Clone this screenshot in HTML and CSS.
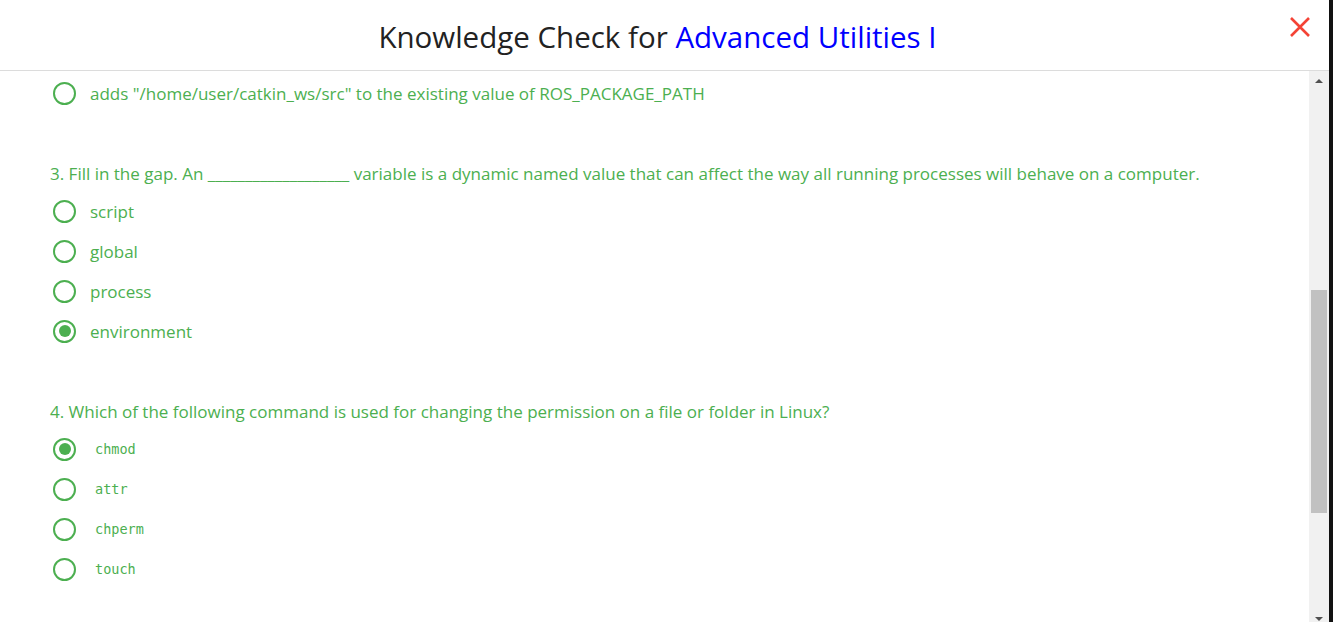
FILE: index.html
```html
<!DOCTYPE html>
<html>
<head>
<meta charset="utf-8">
<link rel="stylesheet" href="styles.css">
</head>
<body>
<div class="modal">
  <header class="modal-header">
    <h1 class="title">Knowledge Check for <span class="course">Advanced Utilities I</span></h1>
    <button class="close" aria-label="Close">
      <svg width="22" height="22" viewBox="0 0 22 22"><path d="M2 2 L20 20 M20 2 L2 20" stroke="#f44336" stroke-width="2.6" stroke-linecap="butt" fill="none"/></svg>
    </button>
  </header>
  <div class="modal-body">
    <div class="content">
      <div class="options first">
        <label class="option"><span class="radio"></span><span class="label">adds "/home/user/catkin_ws/src" to the existing value of ROS_PACKAGE_PATH</span></label>
      </div>

      <div class="question">
        <p class="q-text">3. Fill in the gap. An ___________________ variable is a dynamic named value that can affect the way all running processes will behave on a computer.</p>
        <div class="options">
          <label class="option"><span class="radio"></span><span class="label">script</span></label>
          <label class="option"><span class="radio"></span><span class="label">global</span></label>
          <label class="option"><span class="radio"></span><span class="label">process</span></label>
          <label class="option"><span class="radio checked"></span><span class="label">environment</span></label>
        </div>
      </div>

      <div class="question">
        <p class="q-text">4. Which of the following command is used for changing the permission on a file or folder in Linux?</p>
        <div class="options">
          <label class="option"><span class="radio checked"></span><code class="code">chmod</code></label>
          <label class="option"><span class="radio"></span><code class="code">attr</code></label>
          <label class="option"><span class="radio"></span><code class="code">chperm</code></label>
          <label class="option"><span class="radio"></span><code class="code">touch</code></label>
        </div>
      </div>
    </div>
    <div class="scrollbar">
      <div class="arrow up"></div>
      <div class="track"><div class="thumb"></div></div>
      <div class="arrow down"></div>
    </div>
  </div>
</div>
</body>
</html>
```
FILE: styles.css
```css
html, body {
  margin: 0;
  padding: 0;
  height: 100%;
  overflow: hidden;
}
body {
  background: #111;
  font-family: "Open Sans", "Noto Sans", sans-serif;
}
.modal {
  width: 1329px;
  height: 622px;
  background: #fff;
  display: flex;
  flex-direction: column;
}
.modal-header {
  height: 70px;
  padding-right: 14px;
  border-bottom: 1px solid #dcdcdc;
  display: flex;
  align-items: center;
  justify-content: center;
  position: relative;
  flex: none;
}
.title {
  margin: 0;
  font-weight: 500;
  font-size: 29.5px;
  color: #222;
  padding-top: 3px;
}
.course {
  color: #0000ff;
}
.close {
  position: absolute;
  right: 18px;
  top: 16px;
  border: 0;
  background: none;
  padding: 0;
  width: 22px;
  height: 22px;
}
.close svg { display: block; }
.modal-body {
  flex: 1;
  display: flex;
  min-height: 0;
}
.content {
  flex: 1;
  padding: 2px 0 0 50px;
  overflow: hidden;
  color: #4caf50;
}
.question {
  margin-top: 49px;
}
.q-text {
  margin: 0 0 5px 0;
  font-size: 17px;
  line-height: 24px;
}
.options {
  display: flex;
  flex-direction: column;
}
.option {
  height: 40px;
  display: flex;
  align-items: center;
  gap: 14px;
  font-size: 17px;
}
.radio {
  width: 19px;
  height: 19px;
  margin-left: 3px;
  border: 2.6px solid #4caf50;
  border-radius: 50%;
  box-sizing: content-box;
  display: flex;
  align-items: center;
  justify-content: center;
}
.radio.checked::after {
  content: "";
  width: 12px;
  height: 12px;
  border-radius: 50%;
  background: #4caf50;
}
.code {
  font-family: "DejaVu Sans Mono", monospace;
  font-size: 13.5px;
  margin-left: 5px;
}
.scrollbar {
  width: 20px;
  flex: none;
  background: #f1f1f1;
  display: flex;
  flex-direction: column;
}
.arrow {
  height: 20px;
  flex: none;
  display: flex;
  align-items: center;
  justify-content: center;
}
.arrow.up::after {
  content: "";
  border-left: 4px solid transparent;
  border-right: 4px solid transparent;
  border-bottom: 4px solid #505050;
}
.arrow.down::after {
  content: "";
  border-left: 4px solid transparent;
  border-right: 4px solid transparent;
  border-top: 4px solid #505050;
  margin-top: 14px;
}
.track {
  flex: 1;
  padding: 0 2px;
}
.thumb {
  margin-top: 199px;
  height: 223px;
  background: #c1c1c1;
}
```
